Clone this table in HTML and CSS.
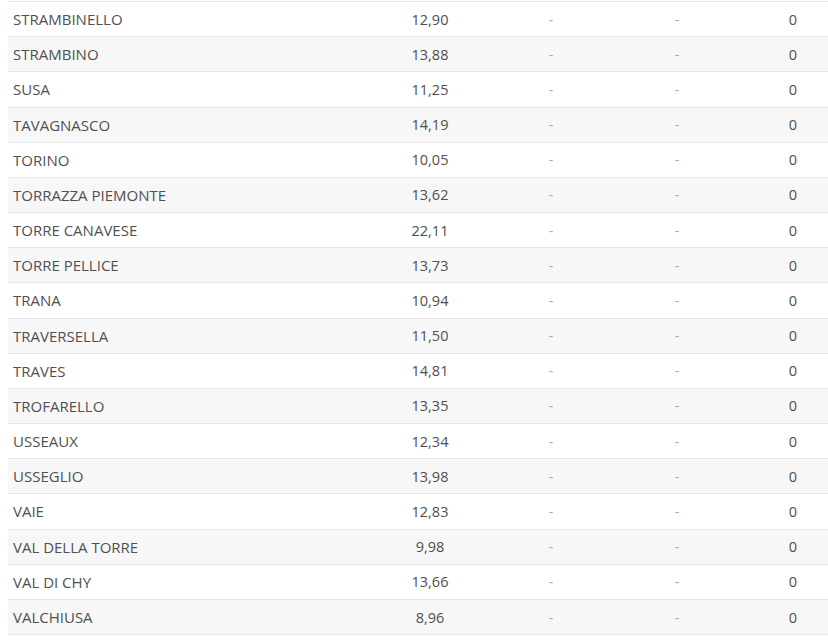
FILE: index.html
```html
<!DOCTYPE html>
<html>
<head>
<meta charset="utf-8">
<link rel="stylesheet" href="styles.css">
</head>
<body>
<div class="table">
  <div class="row"><div class="name">STRAMBINELLO</div><div class="num">12,90</div><div class="dash">-</div><div class="dash">-</div><div class="zero">0</div></div>
  <div class="row"><div class="name">STRAMBINO</div><div class="num">13,88</div><div class="dash">-</div><div class="dash">-</div><div class="zero">0</div></div>
  <div class="row"><div class="name">SUSA</div><div class="num">11,25</div><div class="dash">-</div><div class="dash">-</div><div class="zero">0</div></div>
  <div class="row"><div class="name">TAVAGNASCO</div><div class="num">14,19</div><div class="dash">-</div><div class="dash">-</div><div class="zero">0</div></div>
  <div class="row"><div class="name">TORINO</div><div class="num">10,05</div><div class="dash">-</div><div class="dash">-</div><div class="zero">0</div></div>
  <div class="row"><div class="name">TORRAZZA PIEMONTE</div><div class="num">13,62</div><div class="dash">-</div><div class="dash">-</div><div class="zero">0</div></div>
  <div class="row"><div class="name">TORRE CANAVESE</div><div class="num">22,11</div><div class="dash">-</div><div class="dash">-</div><div class="zero">0</div></div>
  <div class="row"><div class="name">TORRE PELLICE</div><div class="num">13,73</div><div class="dash">-</div><div class="dash">-</div><div class="zero">0</div></div>
  <div class="row"><div class="name">TRANA</div><div class="num">10,94</div><div class="dash">-</div><div class="dash">-</div><div class="zero">0</div></div>
  <div class="row"><div class="name">TRAVERSELLA</div><div class="num">11,50</div><div class="dash">-</div><div class="dash">-</div><div class="zero">0</div></div>
  <div class="row"><div class="name">TRAVES</div><div class="num">14,81</div><div class="dash">-</div><div class="dash">-</div><div class="zero">0</div></div>
  <div class="row"><div class="name">TROFARELLO</div><div class="num">13,35</div><div class="dash">-</div><div class="dash">-</div><div class="zero">0</div></div>
  <div class="row"><div class="name">USSEAUX</div><div class="num">12,34</div><div class="dash">-</div><div class="dash">-</div><div class="zero">0</div></div>
  <div class="row"><div class="name">USSEGLIO</div><div class="num">13,98</div><div class="dash">-</div><div class="dash">-</div><div class="zero">0</div></div>
  <div class="row"><div class="name">VAIE</div><div class="num">12,83</div><div class="dash">-</div><div class="dash">-</div><div class="zero">0</div></div>
  <div class="row"><div class="name">VAL DELLA TORRE</div><div class="num">9,98</div><div class="dash">-</div><div class="dash">-</div><div class="zero">0</div></div>
  <div class="row"><div class="name">VAL DI CHY</div><div class="num">13,66</div><div class="dash">-</div><div class="dash">-</div><div class="zero">0</div></div>
  <div class="row"><div class="name">VALCHIUSA</div><div class="num">8,96</div><div class="dash">-</div><div class="dash">-</div><div class="zero">0</div></div>
</div>
</body>
</html>
```
FILE: styles.css
```css
html, body {
  margin: 0;
  padding: 0;
  background: #ffffff;
  overflow: hidden;
}
body {
  padding: 1px 0 0 8px;
  font-family: "Open Sans", "Liberation Sans", sans-serif;
  font-size: 14px;
  color: #505050;
}
.table {
  width: 820px;
  border-top: 1px solid #e6e6e6;
}
.row {
  display: grid;
  grid-template-columns: 362px 120px 122px 130px 86px;
  height: 34.18px;
  align-items: center;
  border-bottom: 1px solid #e6e6e6;
}
.row:nth-child(even) {
  background: #f7f7f7;
}
.name {
  padding-left: 5px;
  font-size: 15px;
}
.num {
  text-align: center;
  font-size: 14.5px;
}
.dash {
  text-align: center;
  color: #aaaaaa;
}
.zero {
  text-align: center;
  padding-left: 16px;
  font-size: 14.5px;
}
```
